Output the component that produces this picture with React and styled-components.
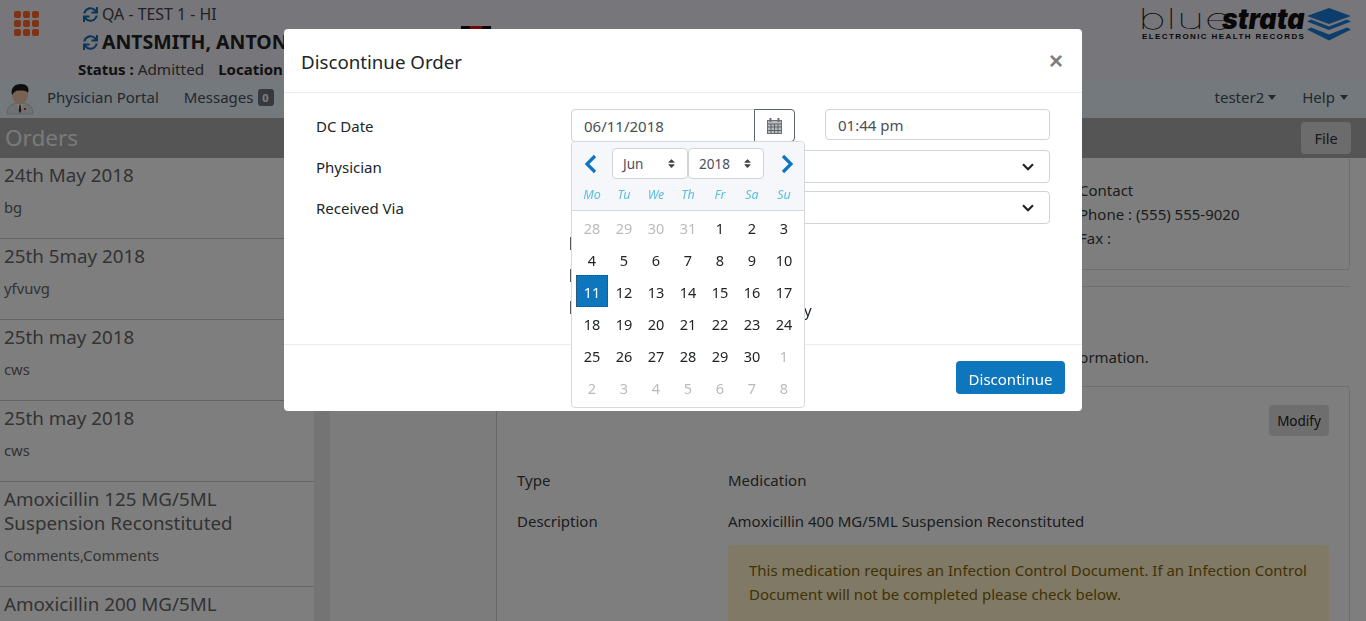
import React from 'react';
import styled, { createGlobalStyle } from 'styled-components';
import { FaSync, FaSort } from 'react-icons/fa';

const GlobalStyle = createGlobalStyle`
  html, body {
    margin: 0;
    height: 621px;
    overflow: hidden;
  }
  body {
    font-family: "Noto Sans", "Open Sans", sans-serif;
    font-size: 15px;
    line-height: 24px;
    color: #3a3a3a;
    background: #fdfdfd;
  }
  * { box-sizing: border-box; }
`;

const Page = styled.div`
  height: 621px;
  overflow: hidden;
`;

/* top header */
const Header = styled.header`
  height: 80px;
  display: flex;
  background: #eeedf6;
`;
const AppGrid = styled.div`
  display: grid;
  grid-template-columns: repeat(3, 7px);
  grid-auto-rows: 7px;
  gap: 2px;
  margin: 11px 0 0 14px;
  width: 25px;
  height: 25px;
  flex: none;
  span {
    background: #ff6428;
    border-radius: 2px;
  }
`;
const Patient = styled.div`
  width: 383px;
  margin-left: 39px;
  flex: none;
  white-space: nowrap;
`;
const FacilityLine = styled.div`
  display: flex;
  align-items: center;
  gap: 4px;
  margin: 2px 0 0 5px;
  color: #444;
  font-size: 15.9px;
`;
const NameLine = styled.div`
  display: flex;
  align-items: center;
  gap: 4px;
  margin: 1px 0 0 5px;
  height: 30px;
  color: #222;
  font-size: 19.5px;
  font-weight: 700;
`;
const StatusLine = styled.div`
  color: #444;
  font-size: 15.3px;
  b {
    color: #222;
    font-size: 15px;
    font-weight: 700;
  }
`;
const LocationLabel = styled.b`
  margin-left: 14px;
`;
const RefreshIcon = styled(FaSync)`
  color: #146fb0;
  font-size: ${(p) => p.$size}px;
  flex: none;
`;
const Flag = styled.div`
  width: 30px;
  height: 30px;
  margin-top: 26px;
  background: radial-gradient(circle at 50% 0, #e01010 0 6px, #111 7px);
  flex: none;
`;
const Logo = styled.div`
  margin: 7px 15px 0 auto;
  display: flex;
  align-items: flex-start;
  gap: 2px;
`;
const LogoText = styled.div`
  width: 163px;
  display: flex;
  flex-direction: column;
`;
const Wordmark = styled.div`
  display: flex;
  height: 25px;
  font-family: Inter, sans-serif;
  font-size: 28px;
  line-height: 25px;
  color: #111;
`;
const WordThin = styled.span`
  width: 80px;
  margin-left: -4px;
  margin-right: 4px;
  font-weight: 100;
  transform: scaleX(1.72);
  transform-origin: left center;
`;
const WordBold = styled.span`
  width: 83px;
  font-weight: 900;
  font-style: italic;
  transform: scaleX(.96);
  transform-origin: left center;
`;
const Tagline = styled.div`
  font-family: "Liberation Sans", sans-serif;
  font-size: 8px;
  line-height: 10px;
  font-weight: 700;
  letter-spacing: 1.4px;
  color: #111;
  white-space: nowrap;
`;

/* nav bar */
const Nav = styled.nav`
  height: 38px;
  display: flex;
  align-items: center;
  background: #e9f2fa;
  color: #46505a;
  padding: 0 17px 0 6px;
`;
const NavLink = styled.span`
  margin: 0 0 4px ${(p) => p.$left || 0}px;
  display: flex;
  align-items: center;
  white-space: nowrap;
`;
const Badge = styled.span`
  margin-left: 4px;
  width: 16px;
  height: 17px;
  border-radius: 3px;
  background: #6c757d;
  color: #fff;
  font-size: 11px;
  font-weight: 700;
  line-height: 17px;
  text-align: center;
`;
const Caret = styled.i`
  margin-left: ${(p) => p.$gap}px;
  border-top: 5px solid currentColor;
  border-left: 4.5px solid transparent;
  border-right: 4.5px solid transparent;
`;

/* orders title bar */
const TitleBar = styled.div`
  height: 40px;
  display: flex;
  align-items: center;
  justify-content: space-between;
  padding: 0 15px 0 5px;
  background: #aaaaaa;
`;
const PageTitle = styled.div`
  font-size: 22.5px;
  color: #f4f4f4;
`;
const FileButton = styled.div`
  width: 50px;
  height: 32px;
  border-radius: 4px;
  background: #d8d8d8;
  color: #333;
  font-size: 14.5px;
  line-height: 32px;
  text-align: center;
`;

const Content = styled.div`
  display: flex;
  height: 463px;
`;
const Sidebar = styled.aside`
  width: 314px;
  flex: none;
`;
const OrderItem = styled.div`
  padding: 5px 4px 0;
  height: ${(p) => p.$height}px;
  border-bottom: 1px solid #c8c8c8;
`;
const OrderTitle = styled.div`
  font-size: 18.8px;
  line-height: 24px;
  color: #666;
`;
const OrderNote = styled.div`
  margin-top: 8px;
  font-size: 14.8px;
  color: #666;
`;
const Gutter = styled.div`
  width: 16px;
  flex: none;
  background: #e9e9e9;
`;
const EmptyColumn = styled.div`
  width: 166px;
  flex: none;
  background: #f8f8f8;
`;
const Main = styled.main`
  flex: 1;
  border-left: 1px solid #cfcfcf;
  padding-right: 16px;
  background: #fdfdfd;
`;
const ContactCard = styled.div`
  height: 112px;
  padding: 20px 0 0 582px;
  border: 1px solid #ddd;
  border-top: none;
  border-left: none;
  border-radius: 0 0 4px 0;
`;
const Divider = styled.hr`
  margin: 16px 0 0;
  border: none;
  border-top: 1px solid #ddd;
`;
const Notice = styled.div`
  margin: 58px 0 17px;
  padding-left: 564px;
`;
const OrderCard = styled.div`
  height: 300px;
  padding: 18px 20px 0;
  border: 1px solid #ddd;
  border-left: none;
  border-radius: 0 4px 4px 0;
`;
const ModifyRow = styled.div`
  display: flex;
  justify-content: flex-end;
`;
const ModifyButton = styled.div`
  width: 60px;
  height: 31px;
  border-radius: 4px;
  background: #dcdcdc;
  color: #222;
  font-size: 13.5px;
  line-height: 32px;
  text-align: center;
`;
const Field = styled.div`
  display: grid;
  grid-template-columns: 211px 1fr;
  margin-top: ${(p) => p.$top}px;
`;
const Alert = styled.div`
  margin: 12px 0 0 211px;
  padding: 13px 20px 20px 21px;
  border-radius: 4px;
  background: #fff3cd;
  color: #856404;
`;

/* modal */
const Overlay = styled.div`
  position: fixed;
  inset: 0;
  display: flex;
  justify-content: center;
  align-items: flex-start;
  padding-top: 29px;
  background: rgba(0, 0, 0, .5);
`;
const Modal = styled.div`
  width: 798px;
  height: 382px;
  display: flex;
  flex-direction: column;
  background: #fff;
  border-radius: 4px;
  color: #212529;
`;
const ModalHeader = styled.div`
  height: 64px;
  display: flex;
  align-items: center;
  justify-content: space-between;
  padding: 3px 19px 0 17px;
  border-bottom: 1px solid #e9ecef;
`;
const ModalTitle = styled.div`
  font-size: 18.7px;
`;
const CloseX = styled.div`
  margin-top: -2px;
  color: #7f7f7f;
  font-family: "Liberation Sans", sans-serif;
  font-size: 24px;
  font-weight: 700;
`;
const ModalBody = styled.div`
  flex: 1;
  padding: 16px 32px 0;
  display: flex;
  flex-direction: column;
  gap: 8px;
`;
const FormRow = styled.div`
  display: grid;
  grid-template-columns: 255px 224px 30px 225px;
  align-items: start;
  height: 33px;
`;
const FieldLabel = styled.label`
  line-height: 34px;
`;
const DateGroup = styled.div`
  position: relative;
  display: flex;
  height: 33px;
`;
const TextInput = styled.input`
  width: ${(p) => p.$width || '100%'};
  height: ${(p) => p.$height || 33}px;
  flex: none;
  padding: 0 12px;
  border: 1px solid #ced4da;
  border-radius: ${(p) => p.$radius || '4px'};
  font: inherit;
  color: #495057;
  background: #fff;
  outline: none;
`;
const CalendarButton = styled.div`
  width: 41px;
  height: 33px;
  flex: none;
  display: flex;
  align-items: center;
  justify-content: center;
  margin-left: -1px;
  border: 1px solid #5b636a;
  border-radius: 0 4px 4px 0;
`;
const SelectBox = styled.div`
  grid-column: 2 / 5;
  height: 33px;
  display: flex;
  align-items: center;
  justify-content: flex-end;
  padding-right: 15px;
  border: 1px solid #ced4da;
  border-radius: 4px;
`;
const CheckRow = styled.div`
  margin: ${(p) => p.$top || 0}px 0 0 255px;
  height: 24px;
  display: flex;
  align-items: center;
  white-space: nowrap;
  input {
    width: 13px;
    height: 13px;
    margin: 0 0 0 -1px;
    appearance: none;
    border: 1px solid #555;
    border-radius: 0;
  }
`;
const CheckText = styled.span`
  margin: 6px 0 0 ${(p) => p.$left}px;
`;
const ModalFooter = styled.div`
  height: 67px;
  display: flex;
  justify-content: flex-end;
  padding: 16px 17px 0;
  border-top: 1px solid #e9ecef;
`;
const PrimaryButton = styled.button`
  width: 109px;
  height: 33px;
  padding: 3px 0 0;
  border: none;
  border-radius: 4px;
  background: #0d76bd;
  color: #fff;
  font: inherit;
`;

/* date picker popup */
const Picker = styled.div`
  position: absolute;
  top: 32px;
  left: 0;
  width: 234px;
  height: 267px;
  background: #fff;
  border: 1px solid #d5d8dc;
  border-radius: 4px;
  z-index: 2;
`;
const PickerHead = styled.div`
  height: 69px;
  background: #f5f7fa;
  border-bottom: 1px solid #d5d8dc;
  border-radius: 4px 4px 0 0;
`;
const PickerNav = styled.div`
  display: flex;
  align-items: center;
  height: 38px;
  padding-top: 5px;
`;
const Arrow = styled.svg`
  width: 14px;
  height: 20px;
  margin: 0 ${(p) => p.$right}px 0 ${(p) => p.$left}px;
  flex: none;
`;
const MiniSelect = styled.div`
  width: 76px;
  height: 31px;
  display: flex;
  align-items: center;
  justify-content: space-between;
  padding: 0 10px;
  background: #fff;
  border: 1px solid #ced4da;
  border-radius: 4px;
  font-size: 13.5px;
  color: #495057;
`;
const WeekRow = styled.div`
  display: grid;
  grid-template-columns: repeat(7, 32px);
  padding: 3px 4px 0;
  font-size: 12.5px;
  font-style: italic;
  line-height: 24px;
  text-align: center;
  color: #5bc0de;
`;
const DayGrid = styled.div`
  display: grid;
  grid-template-columns: repeat(7, 32px);
  grid-auto-rows: 32px;
  padding: 0 4px;
`;
const Day = styled.div`
  line-height: 34px;
  text-align: center;
  font-size: 14.5px;
  color: ${(p) => (p.$selected ? '#fff' : p.$muted ? '#bbb' : '#212529')};
  background: ${(p) => (p.$selected ? '#0d76bd' : 'transparent')};
  outline: ${(p) => (p.$selected ? '1px dotted #444' : 'none')};
  outline-offset: -1px;
`;

const WEEK = ['Mo', 'Tu', 'We', 'Th', 'Fr', 'Sa', 'Su'];
const PREV = [28, 29, 30, 31];
const NEXT = [1, 2, 3, 4, 5, 6, 7, 8];
const DAYS = Array.from({ length: 30 }, (_, i) => i + 1);

const ORDERS = [
  { title: '24th May 2018', note: 'bg', height: 81 },
  { title: '25th 5may 2018', note: 'yfvuvg', height: 81 },
  { title: '25th may 2018', note: 'cws', height: 81 },
  { title: '25th may 2018', note: 'cws', height: 81 },
  { title: 'Amoxicillin 125 MG/5ML Suspension Reconstituted', note: 'Comments,Comments', height: 105 },
  { title: 'Amoxicillin 200 MG/5ML Suspension Reconstituted', note: 'Comments', height: 105 },
];

function Avatar() {
  return (
    <svg width="28" height="32" viewBox="0 0 28 32">
      <path d="M1 31c0-7 3-9 9-11h8c6 2 9 4 9 11z" fill="#e2e2e2" stroke="#a8a8a8" strokeWidth=".6" />
      <path d="M11 20l3 2.500 3-2.500-2 9h-2z" fill="#fff" />
      <path d="M13.300 22h1.400l.6 6-1.300 2-1.300-2z" fill="#333" />
      <circle cx="19" cy="26" r="1.100" fill="#e00" />
      <ellipse cx="14" cy="12" rx="8" ry="9" fill="#f2c4a6" />
      <path d="M6 12C4 4 10 1 15 1c5 0 9 3 7 9-2-3-5-2-9-2.500C10 7.200 8 9 6 12z" fill="#1a1a1a" />
    </svg>
  );
}

function StackIcon() {
  return (
    <svg width="44" height="34" viewBox="0 0 44 34">
      <path d="M22 1l22 8-22 8L0 9z" fill="#187ad6" />
      <path d="M4 12.500l18 7 18-7 4 2-22 8.500-22-8.500z" fill="#187ad6" />
      <path d="M4 20.500l18 7 18-7 4 2-22 11-22-11z" fill="#187ad6" />
    </svg>
  );
}

function CalendarIcon() {
  return (
    <svg width="15" height="16" viewBox="0 0 15 16" fill="none" stroke="#6a6f75">
      <rect x=".5" y="2.500" width="14" height="13" fill="#b9bcc0" />
      <path d="M.5 6h14M.5 9h14M.5 12.500h14M4 6v9.500M7.500 6v9.500M11 6v9.500" stroke="#5f6469" />
      <path d="M3.500 0v4M11.500 0v4" strokeWidth="2" />
    </svg>
  );
}

function Chevron() {
  return (
    <svg width="12" height="8" viewBox="0 0 12 8" fill="none" stroke="#222" strokeWidth="2.200">
      <path d="M1 1.200l5 5 5-5" />
    </svg>
  );
}

function DatePopup() {
  return (
    <Picker>
      <PickerHead>
        <PickerNav>
          <Arrow $left={12} $right={14} viewBox="0 0 14 20" fill="none" stroke="#0d76bd" strokeWidth="3.200">
            <path d="M11 2l-8 8 8 8" />
          </Arrow>
          <MiniSelect>Jun <FaSort size={11} color="#444" /></MiniSelect>
          <MiniSelect>2018 <FaSort size={11} color="#444" /></MiniSelect>
          <Arrow $left={16} $right={0} viewBox="0 0 14 20" fill="none" stroke="#0d76bd" strokeWidth="3.200">
            <path d="M3 2l8 8-8 8" />
          </Arrow>
        </PickerNav>
        <WeekRow>
          {WEEK.map((d) => <span key={d}>{d}</span>)}
        </WeekRow>
      </PickerHead>
      <DayGrid>
        {PREV.map((d) => <Day key={'p' + d} $muted>{d}</Day>)}
        {DAYS.map((d) => <Day key={d} $selected={d === 11}>{d}</Day>)}
        {NEXT.map((d) => <Day key={'n' + d} $muted>{d}</Day>)}
      </DayGrid>
    </Picker>
  );
}

export default function App() {
  return (
    <Page>
      <GlobalStyle />
      <Header>
        <AppGrid>
          {Array.from({ length: 9 }, (_, i) => <span key={i} />)}
        </AppGrid>
        <Patient>
          <FacilityLine><RefreshIcon $size={15} /> QA - TEST 1 - HI</FacilityLine>
          <NameLine><RefreshIcon $size={15} /> ANTSMITH, ANTON</NameLine>
          <StatusLine><b>Status :</b> Admitted<LocationLabel>Location</LocationLabel></StatusLine>
        </Patient>
        <Flag />
        <Logo>
          <LogoText>
            <Wordmark><WordThin>blue</WordThin><WordBold>strata</WordBold></Wordmark>
            <Tagline>ELECTRONIC HEALTH RECORDS</Tagline>
          </LogoText>
          <StackIcon />
        </Logo>
      </Header>
      <Nav>
        <Avatar />
        <NavLink $left={13}>Physician Portal</NavLink>
        <NavLink $left={25}>Messages<Badge>0</Badge></NavLink>
        <NavLink $left={941}>tester2<Caret $gap={4} /></NavLink>
        <NavLink $left={26}>Help<Caret $gap={5} /></NavLink>
      </Nav>
      <TitleBar>
        <PageTitle>Orders</PageTitle>
        <FileButton>File</FileButton>
      </TitleBar>
      <Content>
        <Sidebar>
          {ORDERS.map((o, i) => (
            <OrderItem key={i} $height={o.height}>
              <OrderTitle>{o.title}</OrderTitle>
              <OrderNote>{o.note}</OrderNote>
            </OrderItem>
          ))}
        </Sidebar>
        <Gutter />
        <EmptyColumn />
        <Main>
          <ContactCard>
            <div>Contact</div>
            <div>Phone : (555) 555-9020</div>
            <div>Fax :</div>
          </ContactCard>
          <Divider />
          <Notice>information.</Notice>
          <OrderCard>
            <ModifyRow><ModifyButton>Modify</ModifyButton></ModifyRow>
            <Field $top={32}><span>Type</span><span>Medication</span></Field>
            <Field $top={17}><span>Description</span><span>Amoxicillin 400 MG/5ML Suspension Reconstituted</span></Field>
            <Alert>
              This medication requires an Infection Control Document. If an Infection Control Document will not be completed please check below.
            </Alert>
          </OrderCard>
        </Main>
      </Content>
      <Overlay>
        <Modal>
          <ModalHeader>
            <ModalTitle>Discontinue Order</ModalTitle>
            <CloseX>×</CloseX>
          </ModalHeader>
          <ModalBody>
            <FormRow>
              <FieldLabel>DC Date</FieldLabel>
              <DateGroup>
                <TextInput readOnly value="06/11/2018" $width="184px" $radius="4px 0 0 4px" />
                <CalendarButton><CalendarIcon /></CalendarButton>
                <DatePopup />
              </DateGroup>
              <span />
              <TextInput readOnly value="01:44 pm" $height={31} />
            </FormRow>
            <FormRow>
              <FieldLabel>Physician</FieldLabel>
              <SelectBox><Chevron /></SelectBox>
            </FormRow>
            <FormRow>
              <FieldLabel>Received Via</FieldLabel>
              <SelectBox><Chevron /></SelectBox>
            </FormRow>
            <div>
              <CheckRow $top={-1}><input type="checkbox" /></CheckRow>
              <CheckRow $top={8}><input type="checkbox" /></CheckRow>
              <CheckRow $top={8}>
                <input type="checkbox" />
                <CheckText $left={221}>y</CheckText>
              </CheckRow>
            </div>
          </ModalBody>
          <ModalFooter>
            <PrimaryButton>Discontinue</PrimaryButton>
          </ModalFooter>
        </Modal>
      </Overlay>
    </Page>
  );
}
